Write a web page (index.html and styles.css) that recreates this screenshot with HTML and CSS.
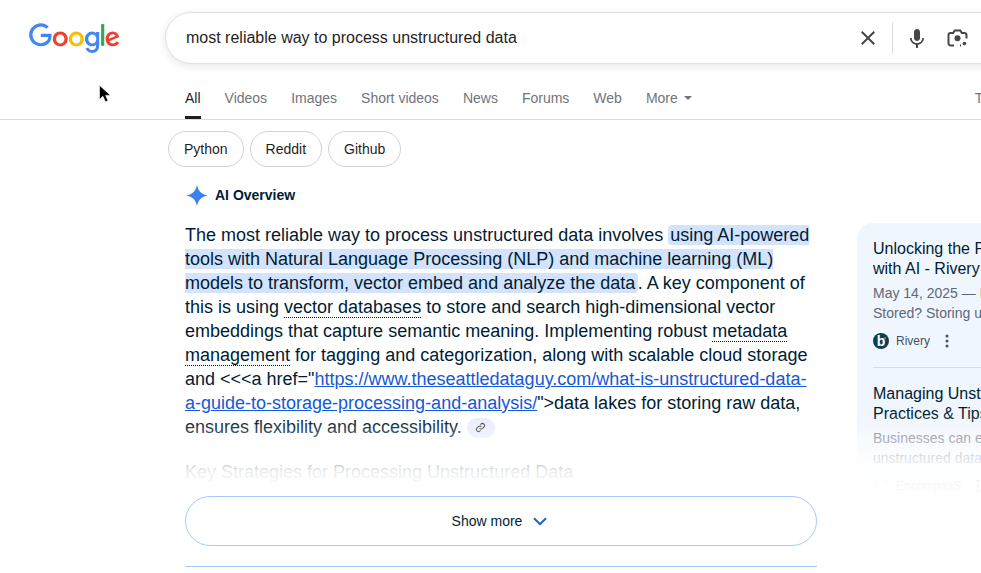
FILE: index.html
```html
<!DOCTYPE html>
<html lang="en">
<head>
<meta charset="utf-8">
<title>most reliable way to process unstructured data - Google Search</title>
<link rel="stylesheet" href="styles.css">
</head>
<body>
<div class="page">
  <header class="top">
    <svg class="logo" viewBox="0 0 272 92" aria-label="Google"><path fill="#EA4335" d="M115.75 47.18c0 12.77-9.99 22.18-22.25 22.18s-22.25-9.41-22.25-22.18C71.25 34.32 81.24 25 93.5 25s22.25 9.32 22.25 22.18zm-9.74 0c0-7.98-5.79-13.44-12.51-13.44S80.99 39.2 80.99 47.18c0 7.9 5.79 13.44 12.51 13.44s12.51-5.55 12.51-13.44z"/><path fill="#FBBC05" d="M163.75 47.18c0 12.77-9.99 22.18-22.25 22.18s-22.25-9.41-22.25-22.18c0-12.85 9.99-22.18 22.25-22.18s22.25 9.32 22.25 22.18zm-9.74 0c0-7.98-5.79-13.44-12.51-13.44s-12.51 5.46-12.51 13.44c0 7.9 5.79 13.44 12.51 13.44s12.51-5.55 12.51-13.44z"/><path fill="#4285F4" d="M209.75 26.34v39.82c0 16.38-9.66 23.07-21.08 23.07-10.75 0-17.22-7.19-19.66-13.07l8.48-3.53c1.51 3.61 5.21 7.87 11.17 7.87 7.31 0 11.84-4.51 11.84-13v-3.19h-.34c-2.18 2.69-6.38 5.04-11.68 5.04-11.09 0-21.25-9.66-21.25-22.09 0-12.52 10.16-22.26 21.25-22.26 5.29 0 9.49 2.35 11.68 4.96h.34v-3.61h9.25zm-8.56 20.92c0-7.81-5.21-13.52-11.84-13.52-6.72 0-12.35 5.71-12.35 13.52 0 7.73 5.63 13.36 12.35 13.36 6.63 0 11.84-5.63 11.84-13.36z"/><path fill="#34A853" d="M225 3v65h-9.5V3h9.5z"/><path fill="#EA4335" d="M262.02 54.48l7.56 5.04c-2.44 3.61-8.32 9.83-18.48 9.83-12.6 0-22.01-9.74-22.01-22.18 0-13.19 9.49-22.18 20.92-22.18 11.51 0 17.14 9.16 18.98 14.11l1.01 2.52-29.65 12.28c2.27 4.45 5.8 6.72 10.75 6.72 4.96 0 8.4-2.44 10.92-6.14zm-23.27-7.98l19.82-8.23c-1.09-2.77-4.37-4.7-8.23-4.7-4.95 0-11.84 4.37-11.59 12.93z"/><path fill="#4285F4" d="M35.29 41.41V32H67c.31 1.64.47 3.58.47 5.68 0 7.06-1.93 15.79-8.15 22.01-6.05 6.3-13.78 9.66-24.02 9.66C16.32 69.35.36 53.89.36 34.91.36 15.93 16.32.47 35.3.47c10.5 0 17.98 4.12 23.6 9.49l-6.64 6.64c-4.03-3.78-9.49-6.72-16.97-6.72-13.86 0-24.7 11.17-24.7 25.03 0 13.86 10.84 25.03 24.7 25.03 8.99 0 14.11-3.61 17.39-6.89 2.66-2.66 4.41-6.46 5.1-11.65l-22.49.01z"/></svg>
    <div class="search">
      <span class="query">most reliable way to process unstructured data</span>
      <svg class="ico-x" viewBox="0 0 24 24"><path fill="#474747" d="M19 6.41 17.59 5 12 10.59 6.41 5 5 6.41 10.59 12 5 17.59 6.41 19 12 13.41 17.59 19 19 17.59 13.41 12z"/></svg>
      <span class="divider"></span>
      <svg class="ico-mic" viewBox="0 0 24 24"><path fill="#474747" d="M12 15c1.66 0 3-1.31 3-2.97V5.97C15 4.31 13.66 3 12 3S9 4.34 9 6v6c0 1.66 1.34 3 3 3zm5.3-3c0 3-2.54 5.1-5.3 5.1S6.7 15 6.7 12H5c0 3.42 2.72 6.24 6 6.72V22h2v-3.28c3.28-.48 6-3.3 6-6.72h-1.7z"/></svg>
      <svg class="ico-lens" viewBox="0 0 24 24"><circle fill="#474747" cx="11.500" cy="12.300" r="3"/><circle fill="#474747" cx="18.400" cy="17.600" r="1.800"/><path fill="none" stroke="#474747" stroke-width="2" d="M20.500 12.500V9.200a2.200 2.200 0 0 0-2.200-2.200h-2.500L14.300 4.500H8.700L7.200 7H4.700a2.200 2.200 0 0 0-2.200 2.200v8.100a2.200 2.200 0 0 0 2.200 2.200H8M15 19.500h-1"/></svg>
    </div>
  </header>

  <nav class="tabs">
    <a class="tab tab-active">All</a>
    <a class="tab">Videos</a>
    <a class="tab">Images</a>
    <a class="tab">Short videos</a>
    <a class="tab">News</a>
    <a class="tab">Forums</a>
    <a class="tab">Web</a>
    <a class="tab">More<svg class="caret" viewBox="0 0 8 4"><path fill="#70757a" d="M0 0h8L4 4z"/></svg></a>
    <a class="tab tab-tools">Tools</a>
  </nav>

  <div class="chips">
    <span class="chip">Python</span>
    <span class="chip">Reddit</span>
    <span class="chip">Github</span>
  </div>

  <div class="columns">
    <main class="overview">
      <div class="ai-head">
        <svg class="spark" viewBox="0 0 24 24"><path fill="#3b82f0" d="M12 0c.9 6.600 5 11 12 12-7 1-11.100 5.400-12 12-.9-6.600-5-11-12-12 7-1 11.100-5.400 12-12z"/></svg>
        <span class="ai-title">AI Overview</span>
      </div>
      <div class="ai-body">
        <p class="answer">The most reliable way to process unstructured data involves <mark class="hl">using AI-powered tools with Natural Language Processing (NLP) and machine learning (ML) models to transform, vector embed and analyze the data</mark>. A key component of this is using <span class="term">vector databases</span> to store and search high-dimensional vector embeddings that capture semantic meaning. Implementing robust <span class="term">metadata management</span> for tagging and categorization, along with scalable cloud storage and &lt;&lt;&lt;a href="<a class="link">https://www.theseattledataguy.com/what-is-unstructured-data-a-guide-to-storage-processing-and-analysis/</a>"&gt;data lakes for storing raw data, ensures flexibility and accessibility. <span class="cite"><svg class="cite-ico" viewBox="0 0 24 24"><path fill="none" stroke="#474747" stroke-width="2.400" d="M10 14a4.500 4.500 0 0 0 6.400 0l3-3A4.500 4.500 0 0 0 13 4.600l-1.200 1.200M14 10a4.500 4.500 0 0 0-6.400 0l-3 3a4.500 4.500 0 0 0 6.400 6.400l1.200-1.200"/></svg></span></p>
        <h2 class="sub">Key Strategies for Processing Unstructured Data</h2>
        <div class="fade"></div>
      </div>
      <button class="more">Show more<svg class="chev" viewBox="0 0 14 9"><path fill="none" stroke="#1a5fd0" stroke-width="2" d="M1 1.200l6 6 6-6"/></svg></button>
      <div class="rule"></div>
    </main>

    <aside class="sources">
      <article class="source">
        <h3 class="s-title">Unlocking the Power of Unstructured Data<br>with AI - Rivery</h3>
        <p class="s-text"><span class="s-date">May 14, 2025 — </span><span class="s-em">How</span> is Unstructured Data<br>Stored? Storing unstructured data requires</p>
        <div class="s-meta"><span class="favicon fav-rivery">b</span><span class="s-site">Rivery</span><svg class="dots" viewBox="0 0 4 14"><circle fill="#474f63" cx="2" cy="2" r="1.500"/><circle fill="#474f63" cx="2" cy="7" r="1.500"/><circle fill="#474f63" cx="2" cy="12" r="1.500"/></svg></div>
      </article>
      <article class="source source-last">
        <h3 class="s-title">Managing Unstructured Data: Best<br>Practices &amp; Tips for Success</h3>
        <p class="s-text">Businesses can easily lose control of their<br>unstructured data without a strategy</p>
        <div class="s-meta"><span class="favicon fav-enc"></span><span class="s-site">EncompaaS</span><svg class="dots" viewBox="0 0 4 14"><circle fill="#474f63" cx="2" cy="2" r="1.500"/><circle fill="#474f63" cx="2" cy="7" r="1.500"/><circle fill="#474f63" cx="2" cy="12" r="1.500"/></svg></div>
      </article>
      <div class="s-fade"></div>
    </aside>
  </div>

  <svg class="cursor" viewBox="0 0 13 20"><path fill="#000" stroke="#fff" stroke-width=".7" d="M.5.500v15.500l3.700-3.500 2.700 6 2.900-1.200-2.600-5.800h5.300z"/></svg>
</div>
</body>
</html>
```

FILE: styles.css
```css
* { box-sizing: border-box; }
html, body { margin: 0; padding: 0; background: #fff; }
body { font-family: "Liberation Sans", Arial, sans-serif; color: #1f1f1f; }
.page { position: relative; width: 981px; height: 573px; overflow: hidden; }

.top { display: flex; align-items: center; padding: 12px 0 0 29px; width: 1100px; }
.logo { width: 91px; height: 31px; flex: none; }
.search { display: flex; align-items: center; flex: none; width: 860px; height: 52px; margin-left: 45px; padding-left: 20px; border: 1px solid #dfe1e5; border-radius: 26px; box-shadow: 0 2px 8px rgba(32,33,36,.1); background: #fff; }
.query { font-size: 16px; color: #1f1f1f; width: 660px; flex: none; }
.ico-x { width: 24px; height: 24px; flex: none; margin-left: 10px; }
.divider { width: 1px; height: 32px; background: #dadce0; flex: none; margin-left: 12px; }
.ico-mic { width: 24px; height: 24px; flex: none; margin-left: 12px; }
.ico-lens { width: 24px; height: 24px; flex: none; margin-left: 17px; }

.tabs { display: flex; align-items: flex-start; gap: 24px; height: 56px; padding: 26px 0 0 185px; border-bottom: 1px solid #dadce0; font-size: 14px; color: #70757a; width: 981px; }
.tab { position: relative; display: flex; align-items: center; height: 16px; white-space: nowrap; }
.tab-active { color: #1f1f1f; }
.tab-active::after { content: ""; position: absolute; left: 0; right: 0; top: 26px; height: 3px; background: #1f1f1f; }
.caret { width: 8px; height: 4px; margin-left: 6px; }
.tab-tools { margin-left: 259px; }

.chips { display: flex; gap: 6px; padding: 11px 0 0 168px; }
.chip { display: flex; align-items: center; height: 36px; padding: 0 15px; border: 1px solid #d2d2d2; border-radius: 18px; font-size: 14px; color: #1f1f1f; }

.columns { display: flex; padding-left: 185px; }
.overview { width: 632px; flex: none; }
.ai-head { display: flex; align-items: center; height: 24px; margin-top: 16px; }
.spark { width: 22px; height: 23px; flex: none; margin: 0 7px 0 1px; }
.ai-title { font-size: 14px; font-weight: 700; color: #001d35; }
.ai-body { position: relative; height: 273px; margin-top: 16px; overflow: hidden; }
.answer { margin: 0; font-size: 18px; line-height: 24px; color: #001d35; }
.hl { padding: 0 2.500px 0 2px; border-radius: 4px; background: #d3e3fd; color: inherit; }
.term { text-decoration: underline dotted 1px #001d35; text-underline-offset: 4px; text-decoration-skip-ink: none; }
.link { color: #1558d6; text-decoration: underline; }
.cite { display: inline-flex; align-items: center; justify-content: center; width: 28px; height: 20px; border-radius: 10px; background: #e9eefb; vertical-align: 0; }
.cite-ico { width: 11px; height: 11px; }
.sub { margin: 21px 0 0; font-size: 18px; line-height: 24px; font-weight: 400; color: #001d35; }
.fade { position: absolute; left: 0; right: 0; top: 196px; bottom: 0; background: linear-gradient(to bottom, rgba(255,255,255,0), rgba(255,255,255,.92) 69%, #fff); }
.more { display: flex; align-items: center; justify-content: center; width: 632px; height: 50px; margin: 0; padding: 0 3px 0 0; border: 1px solid #a3c9ff; border-radius: 25px; background: #fff; font: 14px "Liberation Sans", Arial, sans-serif; color: #001d35; }
.chev { width: 14px; height: 9px; margin-left: 11px; }
.rule { height: 1px; margin-top: 20px; background: #a3c9ff; }

.sources { position: relative; flex: none; width: 400px; height: 290px; margin: 56px 0 0 40px; padding: 16px 16px 0; border-radius: 16px 0 0 0; background: #f0f6fe; overflow: hidden; }
.source { height: 129px; border-bottom: 1px solid #c2e0ff; }
.source-last { border-bottom: 0; margin-top: 16px; }
.s-title { margin: 0; font-size: 16px; line-height: 20px; font-weight: 400; color: #001d35; white-space: nowrap; }
.s-text { margin: 4px 0 0; font-size: 14px; line-height: 20px; color: #5e6678; white-space: nowrap; }
.s-em { color: #b06a2a; }
.s-meta { display: flex; align-items: center; height: 16px; margin-top: 10px; font-size: 12px; color: #474f63; }
.favicon { position: relative; display: flex; align-items: center; justify-content: center; width: 16px; height: 16px; border-radius: 50%; font-size: 14px; font-weight: 700; flex: none; }
.fav-rivery { background: #0b3f57; color: #fff; }
.fav-rivery::after { content: ""; position: absolute; right: 3px; top: 4px; width: 2px; height: 2px; border-radius: 50%; background: #f0743c; }
.fav-enc { background: #fff; border: 3px solid #cfe2f5; }
.s-site { margin-left: 7px; }
.dots { width: 4px; height: 14px; margin-left: 15px; }
.s-fade { position: absolute; left: 0; right: 0; top: 190px; height: 100px; background: linear-gradient(to bottom, rgba(255,255,255,0), rgba(255,255,255,.45) 25%, rgba(255,255,255,.9) 52%, rgba(255,255,255,.94) 70%, #fff 90%); }

.cursor { position: absolute; left: 99px; top: 84px; width: 12px; height: 20px; }
```
